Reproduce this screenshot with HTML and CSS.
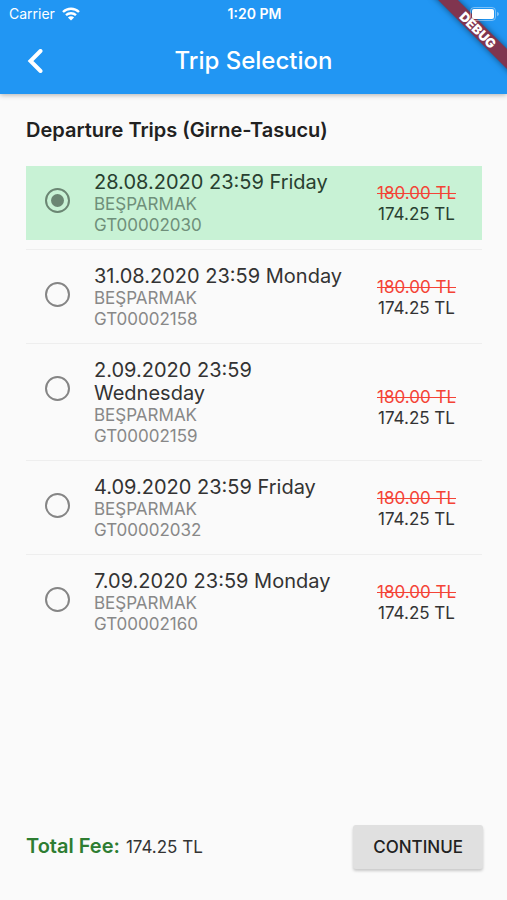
FILE: index.html
```html
<!DOCTYPE html>
<html lang="en">
<head>
  <meta charset="utf-8">
  <meta name="viewport" content="width=device-width, initial-scale=1">
  <title>Trip Selection</title>
  <link rel="stylesheet" href="styles.css">
</head>
<body>
  <header class="app-bar">
    <div class="status-bar">
      <div class="carrier">
        <span>Carrier</span>
        <svg class="wifi" viewBox="0 0 18 14" aria-hidden="true">
          <path d="M1 5 A11.5 11.5 0 0 1 17 5" />
          <path d="M4 8.2 A7.4 7.4 0 0 1 14 8.2" />
          <path class="wifi-dot" d="M9 13.6 L5.9 10.5 A4.4 4.4 0 0 1 12.1 10.5 Z" />
        </svg>
      </div>
      <span class="clock">1:20 PM</span>
      <svg class="battery" viewBox="0 0 30 14" aria-hidden="true">
        <rect class="battery-case" x="0.5" y="0.5" width="25" height="13" rx="3.5" />
        <rect class="battery-level" x="2" y="2" width="22" height="10" rx="2" />
        <path class="battery-tip" d="M27 4.8 Q29 5.5 29 7 Q29 8.500 27 9.200 Z" />
      </svg>
    </div>
    <div class="toolbar">
      <button class="back" type="button" aria-label="Back">
        <svg viewBox="0 0 16 24" aria-hidden="true"><path d="M13.500 2 L3.500 12 L13.500 22" /></svg>
      </button>
      <h1 class="title">Trip Selection</h1>
    </div>
    <div class="banner-corner"><span class="banner">DEBUG</span></div>
  </header>

  <main class="content">
    <h2 class="heading" id="departures">Departure Trips (Girne-Tasucu)</h2>
    <ul class="trips" aria-labelledby="departures">
      <li class="trip-item">
        <label class="trip">
          <input class="radio" type="radio" name="trip" checked>
          <span class="details">
            <span class="date">28.08.2020 23:59 Friday</span>
            <span class="meta">BEŞPARMAK</span>
            <span class="meta">GT00002030</span>
          </span>
          <span class="prices"><s class="old-price">180.00 TL</s><span class="price">174.25 TL</span></span>
        </label>
      </li>
      <li class="trip-item">
        <label class="trip">
          <input class="radio" type="radio" name="trip">
          <span class="details">
            <span class="date">31.08.2020 23:59 Monday</span>
            <span class="meta">BEŞPARMAK</span>
            <span class="meta">GT00002158</span>
          </span>
          <span class="prices"><s class="old-price">180.00 TL</s><span class="price">174.25 TL</span></span>
        </label>
      </li>
      <li class="trip-item">
        <label class="trip">
          <input class="radio" type="radio" name="trip">
          <span class="details">
            <span class="date">2.09.2020 23:59 Wednesday</span>
            <span class="meta">BEŞPARMAK</span>
            <span class="meta">GT00002159</span>
          </span>
          <span class="prices"><s class="old-price">180.00 TL</s><span class="price">174.25 TL</span></span>
        </label>
      </li>
      <li class="trip-item">
        <label class="trip">
          <input class="radio" type="radio" name="trip">
          <span class="details">
            <span class="date">4.09.2020 23:59 Friday</span>
            <span class="meta">BEŞPARMAK</span>
            <span class="meta">GT00002032</span>
          </span>
          <span class="prices"><s class="old-price">180.00 TL</s><span class="price">174.25 TL</span></span>
        </label>
      </li>
      <li class="trip-item">
        <label class="trip">
          <input class="radio" type="radio" name="trip">
          <span class="details">
            <span class="date">7.09.2020 23:59 Monday</span>
            <span class="meta">BEŞPARMAK</span>
            <span class="meta">GT00002160</span>
          </span>
          <span class="prices"><s class="old-price">180.00 TL</s><span class="price">174.25 TL</span></span>
        </label>
      </li>
    </ul>
  </main>

  <footer class="footer">
    <p class="total"><strong class="total-label">Total Fee:</strong> <span>174.25 TL</span></p>
    <button class="continue" type="button">CONTINUE</button>
  </footer>
</body>
</html>
```
FILE: styles.css
```css
* {
  box-sizing: border-box;
}

body {
  margin: 0;
  min-height: 100vh;
  display: flex;
  flex-direction: column;
  background: #fafafa;
  color: #333;
  font-family: Inter, "Noto Sans", sans-serif;
  font-size: 17px;
  line-height: 21px;
}

.app-bar {
  position: relative;
  background: #2196f3;
  color: #fff;
  box-shadow: 0 1px 5px rgba(0, 0, 0, 0.3);
}

.status-bar {
  display: grid;
  grid-template-columns: 1fr auto 1fr;
  align-items: center;
  height: 27px;
  padding: 0 7px 0 9px;
  font-size: 14px;
}

.carrier {
  display: flex;
  align-items: center;
  gap: 7px;
}

.wifi {
  width: 18px;
  height: 14px;
  fill: none;
  stroke: #fff;
  stroke-width: 2.4;
}

.wifi .wifi-dot {
  fill: #fff;
  stroke: none;
}

.clock {
  font-weight: 600;
}

.battery {
  position: relative;
  z-index: 2;
  justify-self: end;
  width: 30px;
  height: 14px;
}

.battery-case {
  fill: none;
  stroke: rgba(255, 255, 255, 0.4);
}

.battery-level {
  fill: #fff;
}

.battery-tip {
  fill: rgba(255, 255, 255, 0.4);
}

.toolbar {
  display: grid;
  grid-template-columns: 72px 1fr 72px;
  align-items: center;
  height: 67px;
}

.back {
  width: 72px;
  height: 64px;
  padding: 0;
  border: 0;
  background: none;
  cursor: pointer;
}

.back svg {
  display: block;
  width: 16px;
  height: 24px;
  margin-left: 27px;
  fill: none;
  stroke: #fff;
  stroke-width: 4;
  stroke-linecap: round;
}

.title {
  margin: 0;
  text-align: center;
  font-size: 24px;
  line-height: 32px;
  font-weight: 500;
}

.banner-corner {
  position: absolute;
  top: 0;
  right: 0;
  z-index: 1;
  width: 80px;
  height: 80px;
  overflow: hidden;
  pointer-events: none;
}

.banner {
  position: absolute;
  top: 23px;
  left: -19px;
  width: 140px;
  transform: rotate(45deg);
  background: #80354f;
  box-shadow: 0 0 6px rgba(0, 0, 0, 0.5);
  text-align: center;
  font-size: 13px;
  line-height: 14px;
  font-weight: 900;
}

.content {
  flex: 1;
  padding: 24px 25px 0 26px;
}

.heading {
  margin: 0;
  color: #212121;
  font-size: 20px;
  line-height: 24px;
  font-weight: 600;
}

.trips {
  margin: 24px 0 0;
  padding: 0;
  list-style: none;
}

.trip-item + .trip-item {
  margin-top: 9px;
  padding-top: 10px;
  border-top: 1px solid #eee;
}

.trip {
  display: grid;
  grid-template-columns: 68px 1fr 131px;
  align-items: center;
  padding: 5px 0 4px;
  cursor: pointer;
}

.trip:has(:checked) {
  background: #c8f2d5;
}

.radio {
  appearance: none;
  align-self: start;
  display: grid;
  place-items: center;
  width: 25px;
  height: 25px;
  margin: 17px 0 0 19px;
  border: 2px solid #858585;
  border-radius: 50%;
}

.radio:checked {
  border-color: #6b8673;
}

.radio:checked::before {
  content: "";
  width: 13px;
  height: 13px;
  border-radius: 50%;
  background: #6b8673;
}

.details {
  display: flex;
  flex-direction: column;
}

.date {
  font-size: 20px;
  line-height: 23px;
}

.meta {
  color: #888;
}

.trip:has(:checked) .meta {
  color: #6f8f7a;
}

.trip:has(:checked) .date,
.trip:has(:checked) .price {
  color: #284030;
}

/* Spare height in tall rows goes mostly above the prices. */
.prices {
  align-self: stretch;
  display: flex;
  flex-direction: column;
  text-align: center;
}

.prices::before,
.prices::after {
  content: "";
  flex: 3 0 11px;
}

.prices::before {
  flex-grow: 7;
}

.old-price {
  color: #f44336;
}

.footer {
  display: flex;
  align-items: center;
  justify-content: space-between;
  padding: 24px 24px 31px 26px;
}

.total {
  display: flex;
  align-items: baseline;
  gap: 6px;
  margin: 0;
}

.total-label {
  color: #2e7d32;
  font-size: 20px;
  font-weight: 600;
}

.continue {
  height: 44px;
  padding: 0 20px;
  border: 0;
  border-radius: 3px;
  background: #e0e0e0;
  box-shadow: 0 2px 3px rgba(0, 0, 0, 0.2);
  color: #212121;
  font-family: inherit;
  font-size: 17px;
  font-weight: 500;
  cursor: pointer;
}
```
